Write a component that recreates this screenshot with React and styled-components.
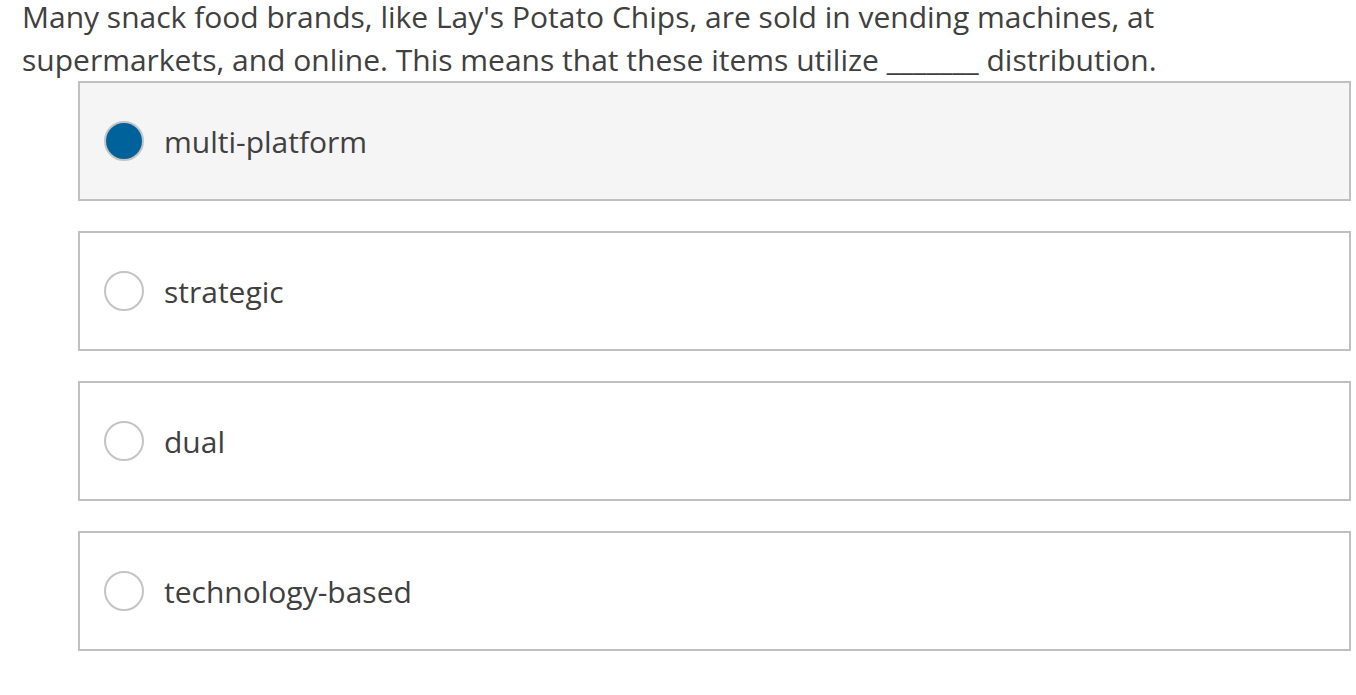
import React from 'react';
import styled, { createGlobalStyle } from 'styled-components';

const Global = createGlobalStyle`
  body {
    margin: 0;
    background: #fff;
    font-family: "Open Sans", "Liberation Sans", sans-serif;
    color: #404040;
  }
`;

const options = [
  { label: 'multi-platform', checked: true },
  { label: 'strategic' },
  { label: 'dual' },
  { label: 'technology-based' },
];

export default function App() {
  return (
    <Root>
      <Global />
      <Question>
        Many snack food brands, like Lay's Potato Chips, are sold in vending machines, at
        supermarkets, and online. This means that these items utilize _______ distribution.
      </Question>
      <List>
        {options.map((o) => (
          <Option key={o.label} checked={o.checked}>
            <Radio checked={o.checked} />
            <Label>{o.label}</Label>
          </Option>
        ))}
      </List>
    </Root>
  );
}

const Root = styled.div`
  padding: 0 5px 0 22px;
`;

const Question = styled.p`
  margin: -5px 0 0;
  width: 1200px;
  font-size: 30px;
  line-height: 43px;
`;

const List = styled.div`
  display: flex;
  flex-direction: column;
  gap: 30px;
  margin-left: 56px;
`;

const Option = styled.div`
  display: flex;
  align-items: center;
  height: 120px;
  box-sizing: border-box;
  border: 2px solid #c0c0c0;
  background: ${(p) => (p.checked ? '#f5f5f5' : '#fff')};
  padding-left: 24px;
`;

const Radio = styled.span`
  width: 40px;
  height: 40px;
  box-sizing: border-box;
  border-radius: 50%;
  border: 2px solid #c4c4c4;
  background: ${(p) => (p.checked ? '#00629b' : '#fff')};
  flex-shrink: 0;
`;

const Label = styled.span`
  margin-left: 20px;
  font-size: 30px;
  color: #404040;
`;
